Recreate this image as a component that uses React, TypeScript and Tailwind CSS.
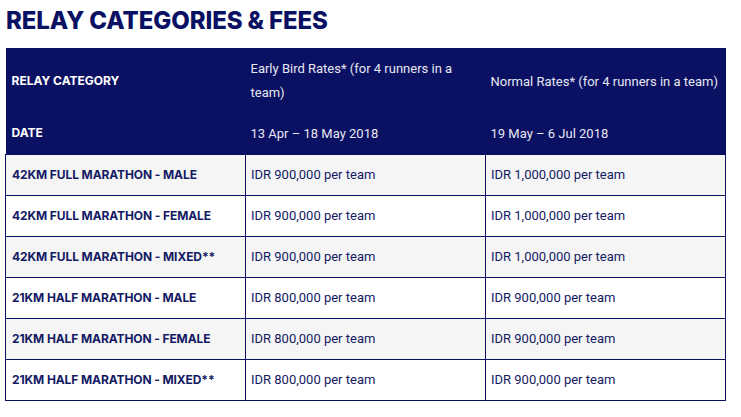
import React from 'react';

const rows = [
    { category: '42KM FULL MARATHON - MALE', early: 'IDR 900,000 per team', normal: 'IDR 1,000,000 per team' },
    { category: '42KM FULL MARATHON - FEMALE', early: 'IDR 900,000 per team', normal: 'IDR 1,000,000 per team' },
    { category: '42KM FULL MARATHON - MIXED**', early: 'IDR 900,000 per team', normal: 'IDR 1,000,000 per team' },
    { category: '21KM HALF MARATHON - MALE', early: 'IDR 800,000 per team', normal: 'IDR 900,000 per team' },
    { category: '21KM HALF MARATHON - FEMALE', early: 'IDR 800,000 per team', normal: 'IDR 900,000 per team' },
    { category: '21KM HALF MARATHON - MIXED**', early: 'IDR 800,000 per team', normal: 'IDR 900,000 per team' },
];

const App: React.FC = () => {
    return (
        <div className="w-[741px] h-[417px] bg-white px-[5px] pt-[6px] font-['Inter','Liberation_Sans',sans-serif] text-[#141a64]">
            <h2 className="text-[24px] leading-[30px] font-extrabold tracking-[-0.1px] text-[#0a1062] pl-px">RELAY CATEGORIES &amp; FEES</h2>
            <table className="mt-[12px] w-[721px] table-fixed border-collapse">
                <thead className="bg-[#0a1062] text-[#e6e7f3]">
                    <tr className="h-[65px]">
                        <th className="w-1/3 px-[6px] text-left align-middle text-[12px] font-bold text-white">RELAY CATEGORY</th>
                        <th className="w-1/3 px-[5px] pt-[1px] text-left align-middle font-['Roboto',sans-serif] text-[13px] font-normal leading-[24px]">
                            Early Bird Rates* (for 4 runners in a team)
                        </th>
                        <th className="w-1/3 px-[5px] pt-[3px] text-left align-middle font-['Roboto',sans-serif] text-[13px] font-normal leading-[24px]">
                            Normal Rates* (for 4 runners in a team)
                        </th>
                    </tr>
                    <tr className="h-[41px]">
                        <th className="px-[6px] text-left align-middle text-[12px] font-bold text-white">DATE</th>
                        <th className="px-[5px] text-left align-middle font-['Roboto',sans-serif] text-[13px] font-normal">13 Apr – 18 May 2018</th>
                        <th className="px-[5px] text-left align-middle font-['Roboto',sans-serif] text-[13px] font-normal">19 May – 6 Jul 2018</th>
                    </tr>
                </thead>
                <tbody>
                    {rows.map((row, i) => (
                        <tr key={row.category} className={`h-[41px] ${i % 2 === 0 ? 'bg-[#f5f5f5]' : 'bg-white'}`}>
                            <td className="border border-[#0a1062] px-[6px] pt-px text-[12px] font-bold tracking-[-0.1px]">{row.category}</td>
                            <td className="border border-[#0a1062] px-[5px] pt-px font-['Roboto',sans-serif] text-[13px]">{row.early}</td>
                            <td className="border border-[#0a1062] px-[5px] pt-px font-['Roboto',sans-serif] text-[13px]">{row.normal}</td>
                        </tr>
                    ))}
                </tbody>
            </table>
        </div>
    );
};

export default App;
